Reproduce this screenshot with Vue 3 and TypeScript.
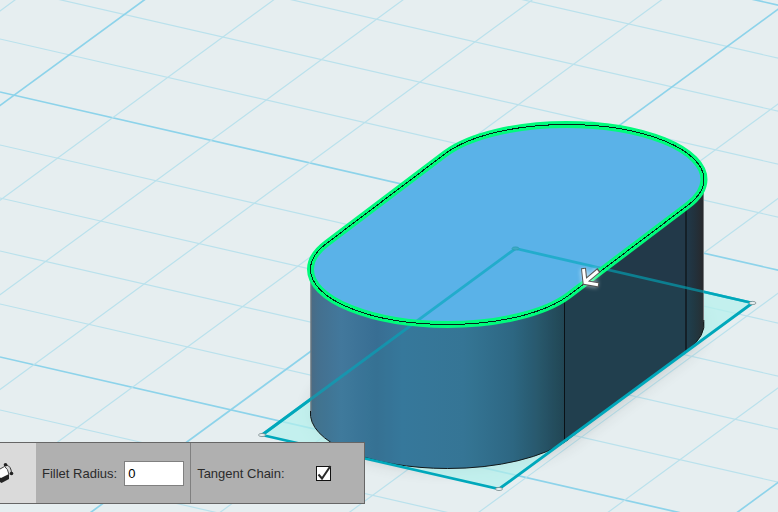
<script setup lang="ts">
import { ref } from 'vue'

interface GridLine {
  x1: number
  y1: number
  x2: number
  y2: number
  major: boolean
}

const radius = ref('0')
const tangentChain = ref(true)

const falling: GridLine[] = Array.from({ length: 16 }, (_, i) => {
  const k = i - 7
  const y = 92 + 53 * k
  return { x1: 0, y1: y, x2: 1600, y2: y + 1600 * 0.229, major: k % 5 === 0 }
})

const rising: GridLine[] = Array.from({ length: 16 }, (_, i) => {
  const k = i - 2
  const x = 144.2 + 129.3 * k
  return { x1: x + 100 / 0.732, y1: -100, x2: x - 1100 / 0.732, y2: 1100, major: k % 5 === 0 }
})

const gridLines = [...falling, ...rising]

const topFace =
  'M326.5 243.5 L445.5 153.5 A137.5 55 0 0 1 566.5 124.5 A137.5 55 0 0 1 704 179.5 A137.5 55 0 0 1 687.5 205.5 L568.5 295.5 A137.5 55 0 0 1 447.5 324.5 A137.5 55 0 0 1 310.5 269.5 A137.5 55 0 0 1 326.5 243.5 Z'
const base =
  'M326.5 387.5 L445.5 298 A137.5 55 0 0 1 687.5 350 L568.5 439.5 A137.5 55 0 0 1 326.5 387.5 Z'
const corners = [
  [752.5, 303],
  [499, 489],
  [262, 435],
  [515.5, 248.5],
]
</script>

<template>
  <main class="workspace">
    <svg class="scene" viewBox="0 0 778 512" preserveAspectRatio="xMinYMin slice" aria-hidden="true">
      <defs>
        <linearGradient id="curve" gradientUnits="userSpaceOnUse" x1="311" y1="0" x2="565" y2="0">
          <stop offset="0" stop-color="#4a6b84" />
          <stop offset="0.03" stop-color="#44708f" />
          <stop offset="0.12" stop-color="#42789c" />
          <stop offset="0.26" stop-color="#386e93" />
          <stop offset="0.36" stop-color="#39769b" />
          <stop offset="0.6" stop-color="#377395" />
          <stop offset="0.78" stop-color="#306583" />
          <stop offset="0.88" stop-color="#2a566d" />
          <stop offset="1" stop-color="#223f4e" />
        </linearGradient>
        <linearGradient id="edge" gradientUnits="userSpaceOnUse" x1="686" y1="0" x2="704" y2="0">
          <stop offset="0" stop-color="#20394a" />
          <stop offset="0.5" stop-color="#22313c" />
          <stop offset="1" stop-color="#28282b" />
        </linearGradient>
        <filter id="soft" x="-20%" y="-20%" width="140%" height="140%">
          <feGaussianBlur stdDeviation="9" />
        </filter>
        <filter id="glow" x="-50%" y="-50%" width="200%" height="200%">
          <feGaussianBlur stdDeviation="2" />
        </filter>
        <clipPath id="sides">
          <path d="M310.5 269.5 V413.5 A137.5 55 0 0 0 447.5 468.5 A137.5 55 0 0 0 568.5 439.5 L687.5 350 A137.5 55 0 0 0 704 324 V179.5 Z" />
        </clipPath>
      </defs>

      <line
        v-for="(line, i) in gridLines"
        :key="i"
        :x1="line.x1"
        :y1="line.y1"
        :x2="line.x2"
        :y2="line.y2"
        :class="line.major ? 'major' : 'minor'"
      />

      <path :d="base" class="shadow" filter="url(#soft)" />
      <path d="M515.5 248.5 L752.5 303 L499 489 L262 435 Z" class="plane" />
      <path d="M262 435 L515.5 248.5 L752.5 303" class="plane-edge" />

      <g clip-path="url(#sides)">
        <rect x="310" y="179" width="255" height="300" fill="url(#curve)" />
        <rect x="564" y="179" width="123" height="300" fill="#223949" />
        <rect x="686" y="179" width="18" height="200" fill="url(#edge)" />
        <path d="M515.5 248.5 L752.5 303 L499 489 L262 435 Z" class="tint" />
        <path d="M564.5 290 V450" class="seam" />
        <path d="M686 200 V356" class="seam thick" />
      </g>
      <path d="M311 275 V412" class="side-line" />
      <path d="M703.5 190 V322" class="side-line" />
      <path d="M310.5 411 A137.5 55 0 0 0 447.5 468.5 A137.5 55 0 0 0 568.5 439.5" class="rim" />
      <path d="M687.5 350 A137.5 55 0 0 0 703.8 320" class="rim" />

      <path :d="topFace" class="face" />
      <path d="M262 435 L515.5 248.5 L752.5 303" class="plane-edge inner" />
      <path d="M752.5 303 L499 489 L262 435" class="plane-edge" />
      <path :d="topFace" class="highlight" />
      <path :d="topFace" class="outline" />
      <ellipse
        v-for="(c, i) in corners"
        :key="`c${i}`"
        :cx="c[0]"
        :cy="c[1]"
        rx="3.5"
        ry="1.6"
        :class="i === 3 ? 'handle dim' : 'handle'"
      />

      <g class="arrow">
        <path d="M598 270.5 L586 281 M584 269 L585.5 282.5 L597.5 284.5" class="arrow-glow" filter="url(#glow)" />
        <path d="M599 270 L586 281 M583.5 268 L585 282.5 L599 285" class="arrow-edge" />
        <path d="M598 271 L586 281 M583.5 269 L585 282.5 L598 284.8" class="arrow-fill" />
      </g>
    </svg>

    <form class="toolbar" @submit.prevent>
      <button class="tool" type="button" aria-label="Fillet">
        <svg width="14" height="22" viewBox="0 0 14 22" aria-hidden="true">
          <path d="M0 7 L4 4.5 L7 6.5 L9 12.5 L1 16.5 L0 16 Z" fill="#fff" />
          <path d="M1 16 L9 12 V17 L1.5 21 L0 20 V15.5 Z" fill="#252525" />
          <path d="M0 7 L4.5 4.5 Q8 6.5 9 12.5" fill="none" stroke="#444" />
          <path d="M5.5 2.5 Q11.5 4 11.5 11.5" fill="none" stroke="#333" />
          <circle cx="5.5" cy="2.7" r="1.8" fill="#222" />
          <circle cx="11.5" cy="11.5" r="1.8" fill="#222" />
        </svg>
      </button>
      <div class="field">
        <label for="radius">Fillet Radius:</label>
        <input id="radius" v-model="radius" class="number" type="text" />
      </div>
      <div class="field chain">
        <label for="tangent">Tangent Chain:</label>
        <span class="check">
          <input id="tangent" v-model="tangentChain" type="checkbox" />
          <svg v-if="tangentChain" viewBox="0 0 15 15" aria-hidden="true">
            <path d="M2.5 8.5 L6 12.5 L14.5 0" />
          </svg>
        </span>
      </div>
    </form>
  </main>
</template>

<style>
body {
  overflow: hidden;
}
</style>

<style scoped>
.workspace {
  display: grid;
  height: 100vh;
  overflow: hidden;
  background: #e6eef0;
  font-family: 'Liberation Sans', Arial, sans-serif;
}
.scene {
  grid-area: 1 / 1;
  width: 100%;
  height: 100vh;
}
.minor {
  stroke: #bae1ec;
  stroke-width: 1.2;
}
.major {
  stroke: #8dd3ea;
  stroke-width: 1.7;
}
.shadow {
  fill: #333;
  opacity: 0.28;
}
.plane {
  fill: #b4f1ed;
  opacity: 0.7;
}
.tint {
  fill: #20a0a0;
  opacity: 0.07;
}
.plane-edge {
  fill: none;
  stroke: #00a8bb;
  stroke-width: 2.8;
}
.inner {
  opacity: 0.62;
}
.seam {
  fill: none;
  stroke: #0a1116;
  stroke-width: 1;
}
.thick {
  stroke: #142028;
  stroke-width: 2;
}
.side-line {
  stroke: #777b7e;
  stroke-width: 1;
}
.rim {
  fill: none;
  stroke: #101719;
  stroke-width: 1;
}
.face {
  fill: #5ab2e8;
}
.highlight {
  fill: none;
  stroke: #00fb7c;
  stroke-width: 7;
}
.outline {
  fill: none;
  stroke: #06231a;
  stroke-width: 1;
  shape-rendering: crispEdges;
}
.handle {
  fill: #e6eef0;
  stroke: #7b8b8e;
  stroke-width: 0.8;
}
.dim {
  fill: #3fa9c4;
  stroke: #2b9db3;
}
.arrow path {
  fill: none;
}
.arrow-glow {
  stroke: #fff;
  stroke-width: 7;
  opacity: 0.5;
}
.arrow-edge {
  stroke: #555;
  stroke-width: 5;
}
.arrow-fill {
  stroke: #fff;
  stroke-width: 3;
}
.toolbar {
  grid-area: 1 / 1;
  place-self: end start;
  display: flex;
  height: 60px;
  margin-bottom: 8px;
  border: 1px solid #666;
  border-left: 0;
  background: #b0b0b0;
  color: #2b2b2b;
  font-size: 13px;
  z-index: 1;
}
.tool {
  display: flex;
  align-items: center;
  width: 36px;
  padding: 0;
  border: 0;
  background: #dadada;
}
.field {
  display: flex;
  align-items: center;
  gap: 7px;
  padding: 0 6px;
}
.number {
  box-sizing: border-box;
  width: 60px;
  height: 25px;
  padding: 0 3px;
  border: 1px solid #808080;
  background: #fff;
  color: #000;
  font: inherit;
}
.chain {
  gap: 31px;
  padding-right: 33px;
  border-left: 1px solid #808080;
}
.check {
  display: grid;
}
.check input {
  grid-area: 1 / 1;
  appearance: none;
  box-sizing: border-box;
  width: 15px;
  height: 15px;
  margin: 0;
  border: 1px solid #111;
  background: #fff;
}
.check svg {
  grid-area: 1 / 1;
  width: 15px;
  height: 15px;
  overflow: visible;
  pointer-events: none;
}
.check path {
  fill: none;
  stroke: #2a2a2a;
  stroke-width: 2;
}
</style>
